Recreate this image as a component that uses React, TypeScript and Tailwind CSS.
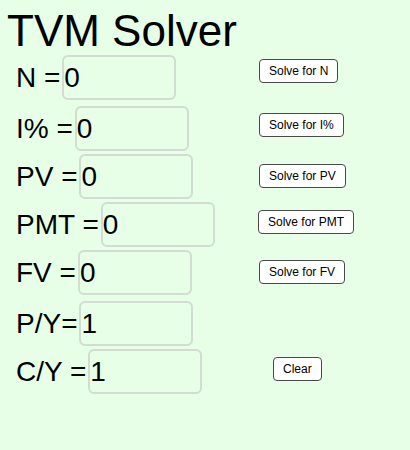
import { useState } from "react";

type Row = {
  key: string;
  label: string;
  init: string;
  rowGap: string;
  button?: string;
  btnClass: string;
};

const rows: Row[] = [
  { key: "n", label: "N =", init: "0", rowGap: "mt-[2px]", button: "Solve for N", btnClass: "mt-[4px]" },
  { key: "i", label: "I% =", init: "0", rowGap: "mt-[6px]", button: "Solve for I%", btnClass: "mt-[7px]" },
  { key: "pv", label: "PV =", init: "0", rowGap: "mt-[3px]", button: "Solve for PV", btnClass: "mt-[10px]" },
  { key: "pmt", label: "PMT =", init: "0", rowGap: "mt-[3px]", button: "Solve for PMT", btnClass: "mt-[8px] -ml-px" },
  { key: "fv", label: "FV =", init: "0", rowGap: "mt-[3px]", button: "Solve for FV", btnClass: "mt-[10px]" },
  { key: "py", label: "P/Y=", init: "1", rowGap: "mt-[6px]", btnClass: "" },
  { key: "cy", label: "C/Y =", init: "1", rowGap: "mt-[3px]", button: "Clear", btnClass: "mt-[8px] ml-[14px]" },
];

export default function App() {
  const [values, setValues] = useState<Record<string, string>>(
    Object.fromEntries(rows.map((r) => [r.key, r.init]))
  );

  return (
    <div className="min-h-screen w-full bg-[#e6ffe6] text-black font-['Liberation_Sans',Arial,sans-serif]">
      <div className="pl-[7px] pt-[9px] text-[44px] leading-[44px]">TVM Solver</div>

      {rows.map((r) => (
        <div key={r.key} className={`flex ${r.rowGap}`}>
          <div className="flex w-[259px] items-center pl-[16px]">
            <span className="whitespace-pre text-[28px] leading-[45px]">{r.label}</span>
            <input
              value={values[r.key]}
              onChange={(e) => setValues({ ...values, [r.key]: e.target.value })}
              className="ml-[2px] h-[45px] w-[114px] rounded-[6px] border-2 border-[#d2dcd2] bg-transparent px-0 text-[28px] text-black outline-none"
            />
          </div>
          {r.button && (
            <button
              onClick={() =>
                r.key === "cy" && setValues(Object.fromEntries(rows.map((x) => [x.key, x.init])))
              }
              className={`self-start h-[24px] rounded-[4px] border border-[#4a4a4a] bg-white px-[9px] text-[12px] leading-[14px] text-black ${r.btnClass}`}
            >
              {r.button}
            </button>
          )}
        </div>
      ))}
    </div>
  );
}
